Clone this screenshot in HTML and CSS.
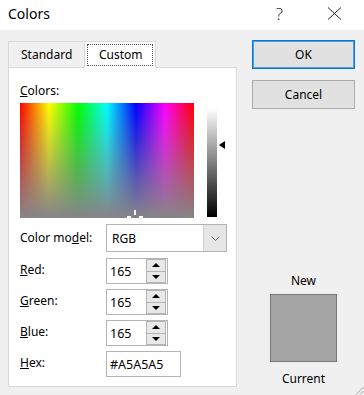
FILE: index.html
```html
<!DOCTYPE html>
<html lang="en">
<head>
    <meta charset="UTF-8">
    <title>Colors</title>
    <link rel="stylesheet" href="styles.css">
</head>
<body>
    <div class="dialog">
        <!-- title bar -->
        <div class="titlebar">
            <span class="title">Colors</span>
            <span class="help">?</span>
            <svg class="close" width="15" height="13" viewBox="0 0 15 13">
                <path d="M1 0.5 L14 12.5 M14 0.5 L1 12.5" stroke="#222" stroke-width="1" fill="none"/>
            </svg>
        </div>

        <div class="content">
            <!-- left: tabs + custom page -->
            <div class="left">
                <div class="tabs">
                    <div class="tab">Standard</div>
                    <div class="tab active"><span class="focus">Custom</span></div>
                </div>
                <div class="panel">
                    <div class="label"><u>C</u>olors:</div>
                    <div class="picker">
                        <div class="spectrum">
                            <span class="mark mark-v"></span>
                            <span class="mark mark-l"></span>
                            <span class="mark mark-r"></span>
                        </div>
                        <div class="lum">
                            <span class="lum-arrow"></span>
                        </div>
                    </div>
                    <div class="fields">
                        <div class="label">Color mo<u>d</u>el:</div>
                        <div class="select">
                            <span class="select-text">RGB</span>
                            <span class="select-btn">
                                <svg width="9" height="5" viewBox="0 0 9 5"><path d="M0.5 0.5 L4.5 4.5 L8.5 0.5" stroke="#666" fill="none"/></svg>
                            </span>
                        </div>

                        <div class="label"><u>R</u>ed:</div>
                        <div class="spin">
                            <span class="spin-text">165</span>
                            <span class="spin-btns"><span class="up"></span><span class="down"></span></span>
                        </div>

                        <div class="label"><u>G</u>reen:</div>
                        <div class="spin">
                            <span class="spin-text">165</span>
                            <span class="spin-btns"><span class="up"></span><span class="down"></span></span>
                        </div>

                        <div class="label"><u>B</u>lue:</div>
                        <div class="spin">
                            <span class="spin-text">165</span>
                            <span class="spin-btns"><span class="up"></span><span class="down"></span></span>
                        </div>

                        <div class="label"><u>H</u>ex:</div>
                        <div class="hex">#A5A5A5</div>
                    </div>
                </div>
            </div>

            <!-- right: buttons + preview -->
            <div class="right">
                <button class="btn btn-default">OK</button>
                <button class="btn">Cancel</button>
                <div class="preview">
                    <div class="preview-label">New</div>
                    <div class="swatch"></div>
                    <div class="preview-label current">Current</div>
                </div>
            </div>
        </div>

        <svg class="grip" width="10" height="10" viewBox="0 0 10 10">
            <path d="M9.5 2 L2 9.5 M9.5 6 L6 9.5" stroke="#a0a0a0" fill="none"/>
        </svg>
    </div>
</body>
</html>
```

FILE: styles.css
```css
* {
    margin: 0;
    padding: 0;
    box-sizing: border-box;
}

body {
    width: 364px;
    height: 395px;
    font-family: "Noto Sans", "Liberation Sans", sans-serif;
    font-size: 12px;
    color: #000;
    background: #f0f0f0;
    overflow: hidden;
}

.dialog {
    position: relative;
    height: 395px;
    display: flex;
    flex-direction: column;
}

/* 标题栏 */
.titlebar {
    height: 30px;
    background: #fff;
    display: flex;
    align-items: center;
    padding: 0 0 3px 8px;
}

.title {
    font-size: 14px;
    flex: 1;
}

.help {
    font-size: 17px;
    line-height: 17px;
    color: #333;
    margin-right: 44px;
    font-weight: 300;
}

.close {
    margin-right: 22px;
}

/* 主体 */
.content {
    flex: 1;
    display: flex;
    gap: 15px;
    padding: 10px 9px 8px 8px;
}

.left {
    width: 229px;
    padding-top: 1px;
}

.tabs {
    display: flex;
    height: 26px;
}

.tab {
    width: 76px;
    border: 1px solid #d9d9d9;
    border-bottom: none;
    border-right: none;
    display: flex;
    align-items: center;
    padding-left: 12px;
    padding-bottom: 1px;
}

.tab.active {
    width: 72px;
    background: #fff;
    border-right: 1px solid #d9d9d9;
    padding: 2px;
    height: 27px;
    position: relative;
    z-index: 1;
}

.focus {
    flex: 1;
    height: 100%;
    border: 1px dotted #555;
    display: flex;
    align-items: center;
    padding-left: 11px;
    padding-bottom: 1px;
}

.panel {
    height: 320px;
    background: #fff;
    border: 1px solid #d9d9d9;
    padding: 15px 0 0 11px;
}

.label {
    line-height: 16px;
}

.picker {
    display: flex;
    margin-top: 4px;
}

.spectrum {
    position: relative;
    width: 174px;
    height: 115px;
    background:
        linear-gradient(to bottom, rgba(134, 132, 136, 0), #868488),
        linear-gradient(to right, #f00, #ff0, #0f0, #0ff, #00f, #f0f, #f00);
}

.mark {
    position: absolute;
    background: #fff;
    box-shadow: 0 0 1px #999;
}

.mark-v {
    left: 114px;
    top: 107px;
    width: 2px;
    height: 5px;
}

.mark-l {
    left: 107px;
    top: 113px;
    width: 4px;
    height: 2px;
}

.mark-r {
    left: 119px;
    top: 113px;
    width: 4px;
    height: 2px;
}

.lum {
    position: relative;
    width: 10px;
    height: 109px;
    margin: 5px 0 0 13px;
    background: linear-gradient(to bottom, #fff, #000);
}

.lum-arrow {
    position: absolute;
    left: 12px;
    top: 33px;
    width: 0;
    height: 0;
    border-top: 4px solid transparent;
    border-bottom: 4px solid transparent;
    border-right: 6px solid #000;
}

.fields {
    display: grid;
    grid-template-columns: 86px auto;
    row-gap: 5px;
    align-items: center;
    justify-items: start;
    margin-top: 6px;
}

.fields .label {
    padding-bottom: 2px;
}

.select {
    width: 121px;
    height: 28px;
    border: 1px solid #b4b4b4;
    display: flex;
    align-items: stretch;
    margin-bottom: 1px;
}

.select-text {
    flex: 1;
    display: flex;
    align-items: center;
    padding-left: 5px;
}

.select-btn {
    width: 23px;
    background: #e6e6e6;
    border-left: 1px solid #cfcfcf;
    display: flex;
    align-items: center;
    justify-content: center;
}

.spin {
    width: 62px;
    height: 26px;
    border: 1px solid #b4b4b4;
    display: flex;
    align-items: center;
    padding: 0 1px 0 3px;
}

.spin-text {
    flex: 1;
    font-size: 12.5px;
}

.spin-btns {
    width: 20px;
    height: 24px;
    display: flex;
    flex-direction: column;
}

.up,
.down {
    flex: 1;
    background: #e8e8e8;
    border: 1px solid #b4b4b4;
    display: flex;
    align-items: center;
    justify-content: center;
}

.up {
    border-bottom: none;
}

.up::after {
    content: "";
    border-left: 4px solid transparent;
    border-right: 4px solid transparent;
    border-bottom: 4px solid #000;
}

.down::after {
    content: "";
    border-left: 4px solid transparent;
    border-right: 4px solid transparent;
    border-top: 4px solid #000;
}

.hex {
    width: 75px;
    height: 26px;
    border: 1px solid #b4b4b4;
    display: flex;
    align-items: center;
    padding-left: 3px;
    font-size: 12.5px;
}

/* 右侧按钮 */
.right {
    width: 103px;
    display: flex;
    flex-direction: column;
}

.btn {
    height: 29px;
    font-family: inherit;
    font-size: 12px;
    background: #e1e1e1;
    border: 1px solid #adadad;
    color: #000;
    padding-bottom: 1px;
}

.btn + .btn {
    margin-top: 11px;
}

.btn-default {
    border-color: #0078d7;
    box-shadow: inset 0 0 0 1px #5a9fdc;
}

.preview {
    margin-top: auto;
    display: flex;
    flex-direction: column;
    align-items: center;
}

.preview-label {
    line-height: 16px;
}

.swatch {
    width: 67px;
    height: 68px;
    margin: 5px 0 9px;
    background: #a5a5a5;
    border: 1px solid #7a7a7a;
}

.grip {
    position: absolute;
    right: 0;
    bottom: 0;
}
```
